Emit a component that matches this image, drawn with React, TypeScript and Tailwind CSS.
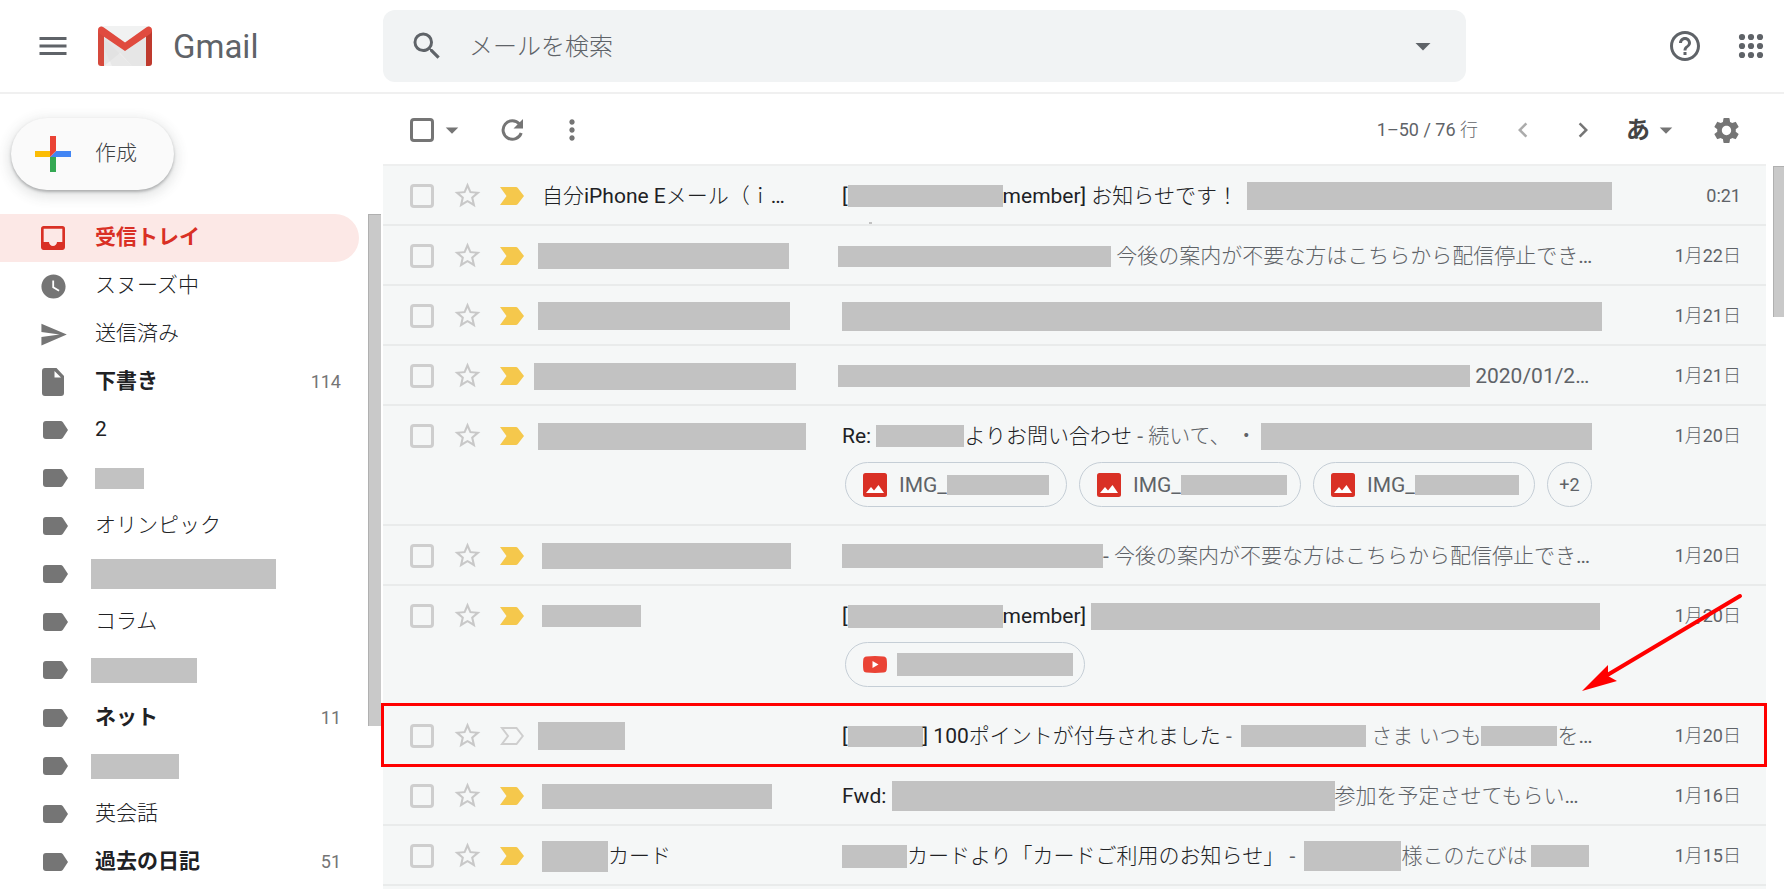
import React from 'react';
import {
  MdArrowDropDown,
  MdChevronLeft,
  MdChevronRight,
  MdHelpOutline,
  MdInbox,
  MdMenu,
  MdMoreVert,
  MdSearch,
  MdSend,
  MdSettings,
  MdStarBorder,
  MdWatchLater,
} from 'react-icons/md';

type Part =
  | { text: string; muted?: boolean }
  | { bar: number; h: number; shift?: string };

interface Mail {
  sender: Part[];
  subject: Part[];
  date: string;
  unimportant?: boolean;
  highlighted?: boolean;
  images?: number[];
  video?: number;
}

interface Folder {
  icon: 'inbox' | 'snooze' | 'sent' | 'draft' | 'label';
  name?: string;
  bar?: number;
  h?: number;
  shift?: string;
  count?: number;
  bold?: boolean;
  active?: boolean;
}

const folders: Folder[] = [
  { icon: 'inbox', name: '受信トレイ', bold: true, active: true },
  { icon: 'snooze', name: 'スヌーズ中' },
  { icon: 'sent', name: '送信済み' },
  { icon: 'draft', name: '下書き', bold: true, count: 114 },
  { icon: 'label', name: '2' },
  { icon: 'label', bar: 49, h: 21 },
  { icon: 'label', name: 'オリンピック' },
  { icon: 'label', bar: 185, h: 30, shift: '-ml-1' },
  { icon: 'label', name: 'コラム' },
  { icon: 'label', bar: 106, h: 25, shift: '-ml-1' },
  { icon: 'label', name: 'ネット', bold: true, count: 11 },
  { icon: 'label', bar: 88, h: 25, shift: '-ml-1' },
  { icon: 'label', name: '英会話' },
  { icon: 'label', name: '過去の日記', bold: true, count: 51 },
];

const mails: Mail[] = [
  {
    sender: [{ text: '自分iPhone Eメール（ｉ…' }],
    subject: [
      { text: '[' },
      { bar: 155, h: 22 },
      { text: 'member] お知らせです！ ' },
      { bar: 365, h: 28, shift: 'ml-1' },
    ],
    date: '0:21',
  },
  {
    sender: [{ bar: 251, h: 26, shift: '-ml-1' }],
    subject: [
      { bar: 273, h: 21, shift: '-ml-1' },
      { text: ' 今後の案内が不要な方はこちらから配信停止でき…', muted: true },
    ],
    date: '1月22日',
  },
  {
    sender: [{ bar: 252, h: 28, shift: '-ml-1' }],
    subject: [{ bar: 760, h: 29 }],
    date: '1月21日',
  },
  {
    sender: [{ bar: 262, h: 27, shift: '-ml-2' }],
    subject: [
      { bar: 632, h: 22, shift: '-ml-1' },
      { text: ' 2020/01/2…', muted: true },
    ],
    date: '1月21日',
  },
  {
    sender: [{ bar: 268, h: 27, shift: '-ml-1' }],
    subject: [
      { text: 'Re: ' },
      { bar: 88, h: 22 },
      { text: 'よりお問い合わせ' },
      { text: ' - 続いて、 ・', muted: true },
      { bar: 331, h: 27, shift: 'ml-1' },
    ],
    date: '1月20日',
    images: [102, 106, 104],
  },
  {
    sender: [{ bar: 249, h: 26 }],
    subject: [
      { bar: 261, h: 24 },
      { text: '- 今後の案内が不要な方はこちらから配信停止でき…', muted: true },
    ],
    date: '1月20日',
  },
  {
    sender: [{ bar: 99, h: 22 }],
    subject: [
      { text: '[' },
      { bar: 155, h: 23 },
      { text: 'member] ' },
      { bar: 509, h: 27 },
    ],
    date: '1月20日',
    video: 176,
  },
  {
    sender: [{ bar: 87, h: 28, shift: '-ml-1' }],
    subject: [
      { text: '[' },
      { bar: 75, h: 21 },
      { text: '] 100ポイントが付与されました' },
      { text: ' - ', muted: true },
      { bar: 125, h: 22, shift: 'ml-1' },
      { text: ' さま いつも', muted: true },
      { bar: 76, h: 20 },
      { text: 'を…', muted: true },
    ],
    date: '1月20日',
    unimportant: true,
    highlighted: true,
  },
  {
    sender: [{ bar: 230, h: 25 }],
    subject: [
      { text: 'Fwd: ' },
      { bar: 443, h: 30 },
      { text: '参加を予定させてもらい…', muted: true },
    ],
    date: '1月16日',
  },
  {
    sender: [{ bar: 66, h: 31 }, { text: 'カード' }],
    subject: [
      { bar: 65, h: 23 },
      { text: 'カードより「カードご利用のお知らせ」' },
      { text: ' - ', muted: true },
      { bar: 97, h: 30, shift: 'ml-1' },
      { text: '様このたびは', muted: true },
      { bar: 58, h: 22, shift: 'ml-1' },
    ],
    date: '1月15日',
  },
];

function Bar({ w, h, shift = '' }: { w: number; h: number; shift?: string }) {
  return <span className={`block shrink-0 bg-[#c2c2c2] ${shift}`} style={{ width: w, height: h }} />;
}

function Parts({ parts }: { parts: Part[] }) {
  return (
    <>
      {parts.map((p, i) =>
        'bar' in p ? (
          <Bar key={i} w={p.bar} h={p.h} shift={p.shift} />
        ) : (
          <span key={i} className={p.muted ? 'text-[#5f6368]' : 'text-[#202124]'}>
            {p.text}
          </span>
        )
      )}
    </>
  );
}

function GmailLogo() {
  return (
    <svg width="54" height="40" viewBox="0 0 54 40" aria-hidden="true">
      <rect x="2" width="50" height="40" rx="2" fill="#e6e6e6" />
      <path d="M6 40 22 27 34 40Z" fill="#f1f1f1" />
      <path d="M6 12 34 40H14L6 22Z" fill="#dcdcdc" opacity=".4" />
      <path d="M3 0H51L27 17Z" fill="#f1f2f2" />
      <path d="M0 4V37a3 3 0 0 0 3 3h3V9Z" fill="#d5493c" />
      <path d="M54 4V37a3 3 0 0 1-3 3h-3V9Z" fill="#bf3a2e" />
      <path d="M0 4C0 1 3-.5 5.500 1.200L27 16.500 48.500 1.200C51-.5 54 1 54 4 54 5.800 53.200 7 52 7.900L27 25 2 7.900C.8 7 0 5.800 0 4Z" fill="#e04b3f" />
    </svg>
  );
}

function PlusIcon() {
  return (
    <svg width="36" height="36" viewBox="0 0 36 36" aria-hidden="true">
      <path d="M0 15h15v6H0Z" fill="#fbbc04" />
      <path d="M15 21h6v15h-6Z" fill="#34a853" />
      <path d="M21 15h15v6H15Z" fill="#4285f4" />
      <path d="M15 0h6v15l-6 6Z" fill="#ea4335" />
    </svg>
  );
}

function AppsIcon() {
  const stops = [9, 18, 27];
  return (
    <svg width="36" height="36" viewBox="0 0 36 36" fill="#5f6368" aria-hidden="true">
      {stops.map((y) => stops.map((x) => <circle key={`${x}-${y}`} cx={x} cy={y} r="3.100" />))}
    </svg>
  );
}

function RefreshIcon() {
  return (
    <svg width="32" height="32" viewBox="0 0 32 32" aria-hidden="true">
      <path d="M25.200 19A9.300 9.300 0 1 1 23.500 10" fill="none" stroke="currentColor" strokeWidth="3" />
      <path d="M27 5v9.500H17.500Z" fill="currentColor" />
    </svg>
  );
}

function LabelIcon() {
  return (
    <svg width="36" height="36" viewBox="0 0 36 36" fill="currentColor" aria-hidden="true">
      <path d="M11 9H25.500a3 3 0 0 1 2.400 1.200L33 18l-5.100 7.800A3 3 0 0 1 25.500 27H11a3 3 0 0 1-3-3V12a3 3 0 0 1 3-3Z" />
    </svg>
  );
}

function FolderIcon({ icon }: { icon: Folder['icon'] }) {
  if (icon === 'inbox') return <MdInbox size={32} />;
  if (icon === 'snooze') return <MdWatchLater size={29} />;
  if (icon === 'sent') return <MdSend size={29} />;
  if (icon === 'draft')
    return (
      <svg width="22" height="28" viewBox="0 0 22 28" fill="currentColor" aria-hidden="true">
        <path d="M3 0H14.500L22 8V25a3 3 0 0 1-3 3H3a3 3 0 0 1-3-3V3a3 3 0 0 1 3-3ZM12.500 3V9.500H19Z" fillRule="evenodd" />
      </svg>
    );
  return <LabelIcon />;
}

function ImportanceMarker({ outline }: { outline?: boolean }) {
  return (
    <svg width="24" height="18" viewBox="0 0 24 18" className="mx-auto block" aria-hidden="true">
      {outline ? (
        <path d="M2 1H16.500L22.800 9 16.500 17H2L8 9Z" fill="none" stroke="#cecece" strokeWidth="2" />
      ) : (
        <path d="M0 0H16q1 0 1.600.8L24 9l-6.400 8.200Q17 18 16 18H0L6.500 9Z" fill="#f5c84c" />
      )}
    </svg>
  );
}

function ImageIcon() {
  return (
    <svg width="24" height="24" viewBox="0 0 24 24" aria-hidden="true">
      <rect width="24" height="24" rx="2.500" fill="#d93025" />
      <path d="M3 20 8 14l3 3.500L15.500 12 21 20Z" fill="#fff" />
    </svg>
  );
}

function VideoIcon() {
  return (
    <svg width="24" height="17" viewBox="0 0 24 17" aria-hidden="true">
      <path d="M3.500.4Q12-.4 20.500.4 23.400.7 23.700 3.500 24.300 8.500 23.700 13.500 23.400 16.300 20.500 16.600 12 17.400 3.500 16.600.6 16.300.3 13.500-.3 8.500.3 3.500.6.7 3.500.4Z" fill="#ea4335" />
      <path d="M9.500 5v7l6-3.500Z" fill="#fff" />
    </svg>
  );
}

function Header() {
  return (
    <header className="flex h-[94px] shrink-0 items-center border-b-2 border-[#f0f0f0] pr-[15px]">
      <div className="flex w-[383px] shrink-0 items-center pl-[35px]">
        <button type="button" aria-label="メインメニュー" className="text-[#5f6368]">
          <MdMenu size={36} />
        </button>
        <a href="#inbox" className="ml-[27px] flex items-center gap-[21px]">
          <GmailLogo />
          <span className="pt-[2px] text-[33px] leading-10 text-[#5f6368]">Gmail</span>
        </a>
      </div>
      <form className="flex h-[72px] max-w-[1083px] flex-1 items-center rounded-xl bg-[#f1f3f4] pr-[25px] pl-[26px] text-[#5f6368]">
        <button type="button" aria-label="検索">
          <MdSearch size={36} />
        </button>
        <input
          type="text"
          aria-label="メールを検索"
          placeholder="メールを検索"
          className="ml-6 h-12 min-w-0 flex-1 bg-transparent pt-[2px] text-2xl outline-none placeholder:text-[#5f6368]"
        />
        <button type="button" aria-label="検索オプションを表示">
          <MdArrowDropDown size={36} />
        </button>
      </form>
      <div className="ml-auto flex items-center gap-[30px] text-[#5f6368]">
        <button type="button" aria-label="サポート">
          <MdHelpOutline size={36} />
        </button>
        <button type="button" aria-label="Google アプリ">
          <AppsIcon />
        </button>
      </div>
    </header>
  );
}

function Sidebar() {
  return (
    <aside className="w-[383px] shrink-0 overflow-hidden">
      <button
        type="button"
        className="my-6 ml-[11px] flex h-[72px] w-[163px] items-center gap-6 rounded-full bg-[#fafafa] pl-6 text-[21px] text-[#3c4043] shadow-[0_2px_3px_rgba(60,64,67,0.35),0_4px_12px_4px_rgba(60,64,67,0.12)]"
      >
        <PlusIcon />
        作成
      </button>
      <div className="flex items-start">
        <nav className="w-[359px]">
          {folders.map((f, i) => (
            <a
              key={i}
              href="#folder"
              aria-label={f.name ?? 'ラベル'}
              className={`flex h-12 items-center rounded-r-full pr-[18px] pl-[35px] text-[21px] ${
                f.active ? 'bg-[#fce8e6] text-[#d93025]' : 'text-[#202124]'
              }`}
            >
              <span className={`mr-6 flex w-9 justify-center ${f.active ? '' : 'text-[#757575]'}`}>
                <FolderIcon icon={f.icon} />
              </span>
              {f.name ? (
                <span className={f.bold ? "font-[Roboto,'Noto_Sans_CJK_JP',sans-serif] font-bold" : ''}>{f.name}</span>
              ) : (
                <Bar w={f.bar ?? 0} h={f.h ?? 0} shift={f.shift} />
              )}
              {f.count && <span className="ml-auto text-lg text-[#757575]">{f.count}</span>}
            </a>
          ))}
        </nav>
        <div className="ml-[9px] h-[512px] w-[13px] border-t border-l border-[#b0b0b0] bg-[#c9c9c9]" />
      </div>
    </aside>
  );
}

function Toolbar() {
  return (
    <div className="flex h-[70px] shrink-0 items-center pt-[2px] pr-[42px] pl-[27px] text-[#757575]">
      <input
        type="checkbox"
        aria-label="すべて選択"
        className="h-6 w-6 appearance-none rounded border-[3px] border-[#757575]"
      />
      <button type="button" aria-label="選択" className="ml-[3px]">
        <MdArrowDropDown size={30} />
      </button>
      <button type="button" aria-label="更新" className="ml-[29px]">
        <RefreshIcon />
      </button>
      <button type="button" aria-label="その他" className="ml-7">
        <MdMoreVert size={32} />
      </button>
      <div className="ml-auto flex items-center">
        <span className="text-lg text-[#5f6368]">1–50 / 76 行</span>
        <button type="button" aria-label="前" disabled className="ml-[30px] opacity-60">
          <MdChevronLeft size={30} />
        </button>
        <button type="button" aria-label="次" className="ml-[30px]">
          <MdChevronRight size={30} />
        </button>
        <button type="button" aria-label="入力ツール" className="ml-7 flex items-center gap-px">
          <span className="font-[Roboto,'Noto_Sans_CJK_JP',sans-serif] text-2xl leading-8 font-bold text-[#444]">あ</span>
          <MdArrowDropDown size={30} />
        </button>
        <button type="button" aria-label="設定" className="ml-[30px]">
          <MdSettings size={31} />
        </button>
      </div>
    </div>
  );
}

function Attachments({ mail }: { mail: Mail }) {
  if (!mail.images && !mail.video) return null;
  const chip = 'flex h-[45px] items-center rounded-full border border-[#c5ced6] text-[#5f6368]';
  return (
    <div className="-mt-[2px] ml-[3px] flex gap-3 pb-[17px]">
      {mail.images?.map((w) => (
        <button key={w} type="button" className={`${chip} w-[222px] pl-[17px]`}>
          <ImageIcon />
          <span className="ml-3">IMG_</span>
          <Bar w={w} h={20} />
        </button>
      ))}
      {mail.images && (
        <button type="button" className={`${chip} w-[45px] justify-center text-lg`}>
          +2
        </button>
      )}
      {mail.video && (
        <button type="button" aria-label="動画" className={`${chip} w-[240px] gap-[10px] pl-[17px]`}>
          <VideoIcon />
          <Bar w={mail.video} h={23} />
        </button>
      )}
    </div>
  );
}

function RowCallout() {
  return (
    <>
      <div className="pointer-events-none absolute -top-[3px] -right-px bottom-[-1px] -left-[2px] z-10 border-[3px] border-[#ff0000]" />
      <svg
        width="164"
        height="104"
        viewBox="0 0 164 104"
        className="pointer-events-none absolute right-[22px] bottom-[72px] z-10"
        aria-hidden="true"
      >
        <path d="M160 6 24 87" stroke="#ff0000" strokeWidth="4" strokeLinecap="round" />
        <path d="M2 101 28 75v11l9 5Z" fill="#ff0000" />
      </svg>
    </>
  );
}

function MailRow({ mail, first }: { mail: Mail; first: boolean }) {
  const cell = 'border-b-2 border-[#e9ebeb] p-0 align-top';
  return (
    <tr className="relative">
      <td className={cell}>
        <div className="flex h-[58px] items-center pt-[2px] pl-[27px]">
          <input
            type="checkbox"
            aria-label="選択"
            className="h-6 w-6 appearance-none rounded border-[3px] border-[#cecece]"
          />
        </div>
        {mail.highlighted && <RowCallout />}
      </td>
      <td className={cell}>
        <button type="button" aria-label="スター" className="flex h-[58px] w-full items-center justify-center text-[#c8c8c8]">
          <MdStarBorder size={31} />
        </button>
      </td>
      <td className={cell}>
        <div className="flex h-[58px] items-center pt-[2px]">
          <ImportanceMarker outline={mail.unimportant} />
        </div>
      </td>
      <td className={cell}>
        <div className="flex h-[58px] items-center overflow-hidden pt-[2px] pl-[10px] whitespace-pre">
          <Parts parts={mail.sender} />
        </div>
      </td>
      <td className={cell}>
        <div className="relative flex h-[58px] items-center overflow-hidden pt-[2px] pl-2 whitespace-pre">
          <Parts parts={mail.subject} />
          {first && <span className="absolute bottom-0 left-[35px] h-[2px] w-[3px] bg-[#c2c2c2]" />}
        </div>
        <div className="pl-2">
          <Attachments mail={mail} />
        </div>
      </td>
      <td className={cell}>
        <div className="flex h-[58px] items-center justify-end pt-[2px] pr-[25px] text-lg text-[#5f6368]">{mail.date}</div>
      </td>
    </tr>
  );
}

export default function App() {
  return (
    <div className="flex h-screen flex-col overflow-hidden bg-white font-[Roboto,'Noto_Sans_CJK_JP_Light','Noto_Sans_CJK_JP',sans-serif]">
      <Header />
      <div className="flex min-h-0 flex-1">
        <Sidebar />
        <main className="flex min-w-0 flex-1 flex-col">
          <Toolbar />
          <div className="flex min-h-0 flex-1 items-start">
            <div className="mr-[7px] min-w-0 flex-1 self-stretch border-t-2 border-[#eeefef] bg-[#f5f7f7]">
              <table className="w-full table-fixed border-separate border-spacing-0 text-[21px] leading-8">
                <colgroup>
                  <col className="w-[59px]" />
                  <col className="w-[50px]" />
                  <col className="w-[40px]" />
                  <col className="w-[302px]" />
                  <col />
                  <col className="w-[126px]" />
                </colgroup>
                <tbody>
                  {mails.map((m, i) => (
                    <MailRow key={i} mail={m} first={i === 0} />
                  ))}
                </tbody>
              </table>
            </div>
            <div className="mt-[2px] h-[151px] w-[11px] border-t border-l border-[#b0b0b0] bg-[#c9c9c9]" />
          </div>
        </main>
      </div>
    </div>
  );
}
